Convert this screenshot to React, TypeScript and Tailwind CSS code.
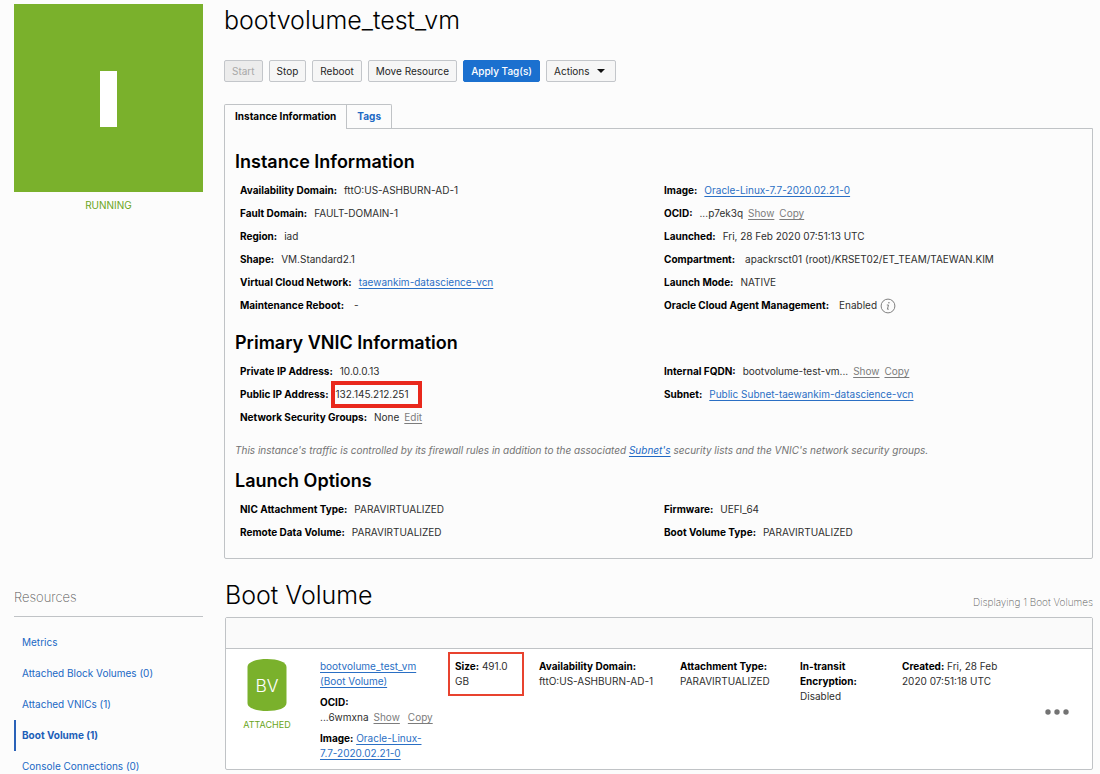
import type { ReactNode } from "react";

const linkBlue = "text-[#2a6fc4] underline underline-offset-2";
const linkGray = "text-[#7c7c7c] underline underline-offset-2";

function Field({ label, children }: { label: string; children: ReactNode }) {
  return (
    <div className="flex h-[23px] items-center gap-[7px] whitespace-nowrap">
      <dt className="font-bold text-black">{label}:</dt>
      <dd className="flex items-center gap-[5px]">{children}</dd>
    </div>
  );
}

function FieldGrid({ children }: { children: ReactNode }) {
  return <div className="grid grid-cols-2 items-start pt-[5px] pr-1 pl-[15px]">{children}</div>;
}

function SectionHeading({ children }: { children: ReactNode }) {
  return <h2 className="pl-[10px] text-[18px] leading-6 font-semibold text-black">{children}</h2>;
}

function ShowCopy() {
  return (
    <>
      <a href="#show" className={linkGray}>Show</a>
      <a href="#copy" className={linkGray}>Copy</a>
    </>
  );
}

function InfoIcon() {
  return (
    <svg viewBox="0 0 16 16" className="-ml-[2px] h-4 w-4" fill="none" stroke="#808080" aria-hidden="true">
      <circle cx="8" cy="8" r="6.9" strokeWidth="1" />
      <circle cx="8.9" cy="4.7" r="0.8" fill="#808080" stroke="none" />
      <path d="M6.8 7h1.7l-1.1 4.2h1.4" strokeWidth="1" />
    </svg>
  );
}

const buttonBase = "h-[22px] rounded-[2px] border px-[7px] leading-5";
const buttonPlain = "border-[#c3c6ca] bg-[#f6f6f6] text-[#1f1f1f]";

const resources = [
  { name: "Metrics", active: false },
  { name: "Attached Block Volumes (0)", active: false },
  { name: "Attached VNICs (1)", active: false },
  { name: "Boot Volume (1)", active: true },
  { name: "Console Connections (0)", active: false },
];

export default function App() {
  return (
    <div className="min-h-screen bg-[#fcfcfc] pr-[7px] pl-[14px] font-['Inter','Liberation_Sans',sans-serif] text-[10px] leading-[15px] text-[#2e2e2e]">
      <div className="flex gap-[21px]">
        <aside className="w-[189px] shrink-0 pt-1">
          <div className="flex h-[188px] items-center justify-center bg-[#7ab12c] pt-[2px]">
            <svg viewBox="0 0 17 56" className="h-14 w-[17px]" role="img" aria-label="Instance">
              <rect width="17" height="56" fill="#fff" />
            </svg>
          </div>
          <p className="pt-[6px] text-center text-[#6aa521]">RUNNING</p>
        </aside>

        <main className="min-w-0 flex-1">
          <h1 className="pt-1 text-[25px] leading-8 font-light text-black">bootvolume_test_vm</h1>
          <div className="mt-6 flex gap-[6px]">
            <button disabled className={`${buttonBase} border-[#c3c6ca] bg-[#ececec] text-[#a8a8a8]`}>Start</button>
            <button className={`${buttonBase} ${buttonPlain}`}>Stop</button>
            <button className={`${buttonBase} ${buttonPlain}`}>Reboot</button>
            <button className={`${buttonBase} ${buttonPlain}`}>Move Resource</button>
            <button className={`${buttonBase} border-[#1b70cf] bg-[#1b70cf] font-medium text-white`}>Apply Tag(s)</button>
            <button className={`${buttonBase} ${buttonPlain} flex items-center gap-[7px] pr-[10px]`}>
              Actions
              <svg viewBox="0 0 8 4" className="h-1 w-2" aria-hidden="true">
                <path d="M0 0h8L4 4z" fill="#111" />
              </svg>
            </button>
          </div>

          <div role="tablist" className="mt-[22px] flex">
            <button role="tab" aria-selected="true" className="relative z-10 -mb-px h-[25px] rounded-tl-[2px] border border-b-0 border-[#c0c3c6] bg-[#fcfcfc] px-[10px] pb-[2px] font-bold text-black">
              Instance Information
            </button>
            <button role="tab" aria-selected="false" className="h-6 rounded-tr-[2px] border border-b-0 border-l-0 border-[#c0c3c6] px-[10px] font-bold text-[#2068c4]">
              Tags
            </button>
          </div>
          <section className="rounded-b-[2px] border border-[#c0c3c6] pt-[21px] pb-[14px]">
            <SectionHeading>Instance Information</SectionHeading>
            <FieldGrid>
              <dl>
                <Field label="Availability Domain">fttO:US-ASHBURN-AD-1</Field>
                <Field label="Fault Domain">FAULT-DOMAIN-1</Field>
                <Field label="Region">iad</Field>
                <Field label="Shape">VM.Standard2.1</Field>
                <Field label="Virtual Cloud Network">
                  <a href="#vcn" className={linkBlue}>taewankim-datascience-vcn</a>
                </Field>
                <Field label="Maintenance Reboot"><span className="pl-[3px]">-</span></Field>
              </dl>
              <dl>
                <Field label="Image">
                  <a href="#image" className={linkBlue}>Oracle-Linux-7.7-2020.02.21-0</a>
                </Field>
                <Field label="OCID">...p7ek3q <ShowCopy /></Field>
                <Field label="Launched">Fri, 28 Feb 2020 07:51:13 UTC</Field>
                <Field label="Compartment">
                  <span className="pl-[3px]">apackrsct01 (root)/KRSET02/ET_TEAM/TAEWAN.KIM</span>
                </Field>
                <Field label="Launch Mode">NATIVE</Field>
                <Field label="Oracle Cloud Agent Management">
                  <span className="pl-[3px]">Enabled</span>
                  <InfoIcon />
                </Field>
              </dl>
            </FieldGrid>

            <div className="pt-[14px]">
              <SectionHeading>Primary VNIC Information</SectionHeading>
            </div>
            <FieldGrid>
              <dl>
                <Field label="Private IP Address">10.0.0.13</Field>
                <Field label="Public IP Address">
                  <span className="relative">
                    132.145.212.251
                    <span className="absolute -inset-y-[6px] -right-[14px] -left-[5px] border-4 border-[#e9281c]" />
                  </span>
                </Field>
                <Field label="Network Security Groups">
                  None <a href="#edit" className={linkGray}>Edit</a>
                </Field>
              </dl>
              <dl>
                <Field label="Internal FQDN">bootvolume-test-vm... <ShowCopy /></Field>
                <Field label="Subnet">
                  <a href="#subnet" className={linkBlue}>Public Subnet-taewankim-datascience-vcn</a>
                </Field>
              </dl>
            </FieldGrid>
            <p className="pt-[14px] pl-[10px] text-[#737373] italic">
              This instance's traffic is controlled by its firewall rules in addition to the associated{" "}
              <a href="#subnet" className="text-[#2068c4] underline underline-offset-2">Subnet's</a> security lists and the VNIC's network security groups.
            </p>

            <div className="pt-[11px]">
              <SectionHeading>Launch Options</SectionHeading>
            </div>
            <FieldGrid>
              <dl>
                <Field label="NIC Attachment Type">PARAVIRTUALIZED</Field>
                <Field label="Remote Data Volume">PARAVIRTUALIZED</Field>
              </dl>
              <dl>
                <Field label="Firmware">UEFI_64</Field>
                <Field label="Boot Volume Type">PARAVIRTUALIZED</Field>
              </dl>
            </FieldGrid>
          </section>
        </main>
      </div>

      <div className="flex gap-[22px] pt-5">
        <nav aria-label="Resources" className="w-[189px] shrink-0">
          <h2 className="border-b border-[#c0c3c6] pt-2 pb-[9px] text-[13px] leading-5 font-extralight text-[#555555]">Resources</h2>
          <ul className="pt-[10px]">
            {resources.map((item) => (
              <li key={item.name}>
                <a
                  href="#resource"
                  className={
                    item.active
                      ? "flex h-[31px] items-center border-l-2 border-[#2a62b8] pl-[6px] font-bold text-[#1d5fb8]"
                      : "flex h-[31px] items-center border-l-2 border-transparent pl-[6px] text-[#2068c4]"
                  }
                >
                  {item.name}
                </a>
              </li>
            ))}
          </ul>
        </nav>

        <section className="min-w-0 flex-1">
          <div className="flex items-end justify-between">
            <h2 className="pb-[6px] text-[25px] leading-8 font-light text-black">Boot Volume</h2>
            <p className="pb-[7px] font-extralight text-[#5c5c5c]">Displaying 1 Boot Volumes</p>
          </div>
          <div className="rounded-[2px] border border-[#c0c3c6] bg-white">
            <div className="h-[31px] border-b border-[#c0c3c6] bg-[#fafafa]" />
            <table className="w-full table-fixed">
              <colgroup>
                <col className="w-[82px]" />
                <col className="w-[137px]" />
                <col className="w-[84px]" />
                <col className="w-[141px]" />
                <col className="w-[120px]" />
                <col className="w-[102px]" />
                <col />
                <col className="w-[68px]" />
              </colgroup>
              <tbody>
                <tr className="h-[120px] align-top">
                  <td className="pt-[10px] text-center">
                    <svg viewBox="0 0 40 52" className="mx-auto h-[52px] w-10" role="img" aria-label="Boot volume">
                      <path d="M0.5 8C0.5 3 9 0 20 0S39.500 3 39.500 8v36c0 5-8.500 8-19.500 8S0.500 49 0.500 44z" fill="#7ab12c" />
                      <text x="20" y="32.5" textAnchor="middle" fill="#fff" fontSize="17.5" fontWeight="300" fontFamily="Inter, sans-serif">BV</text>
                    </svg>
                    <p className="pt-[6px] text-[9px] text-[#6aa521]">ATTACHED</p>
                  </td>
                  <td className="pt-[10px] pl-3">
                    <a href="#volume" className={linkBlue}>bootvolume_test_vm<br />(Boot Volume)</a>
                    <p className="pt-[6px] whitespace-nowrap">
                      <b className="font-bold text-black">OCID:</b>
                      <br />
                      <span className="flex">
                        ...6wmxna
                        <a href="#show" className={`${linkGray} ml-[5px]`}>Show</a>
                        <a href="#copy" className={`${linkGray} ml-2`}>Copy</a>
                      </span>
                    </p>
                    <p className="pt-[6px]">
                      <b className="font-bold text-black">Image:</b>{" "}
                      <a href="#image" className={linkBlue}>Oracle-Linux-<br />7.7-2020.02.21-0</a>
                    </p>
                  </td>
                  <td className="pt-[10px] pl-[10px]">
                    <div className="relative w-[62px]">
                      <p><b className="font-bold text-black">Size:</b> 491.0</p>
                      <p>GB</p>
                      <span className="absolute -inset-[7px] border-2 border-[#e8432f]" />
                    </div>
                  </td>
                  <td className="pt-[10px] pl-[10px] whitespace-nowrap">
                    <b className="block font-bold text-black">Availability Domain:</b>
                    fttO:US-ASHBURN-AD-1
                  </td>
                  <td className="pt-[10px] pl-[10px] whitespace-nowrap">
                    <b className="block font-bold text-black">Attachment Type:</b>
                    PARAVIRTUALIZED
                  </td>
                  <td className="pt-[10px] pl-[10px]">
                    <b className="block font-bold text-black">In-transit<br />Encryption:</b>
                    Disabled
                  </td>
                  <td className="pt-[10px] pl-[10px]">
                    <b className="font-bold text-black">Created:</b> Fri, 28 Feb
                    <br />
                    2020 07:51:18 UTC
                  </td>
                  <td className="pt-1 pr-[23px] text-right align-middle">
                    <button aria-label="Actions">
                      <svg viewBox="0 0 24 6" className="h-[6px] w-6" fill="#737373">
                        <circle cx="3" cy="3" r="2.7" />
                        <circle cx="12" cy="3" r="2.7" />
                        <circle cx="21" cy="3" r="2.7" />
                      </svg>
                    </button>
                  </td>
                </tr>
              </tbody>
            </table>
          </div>
        </section>
      </div>
    </div>
  );
}
